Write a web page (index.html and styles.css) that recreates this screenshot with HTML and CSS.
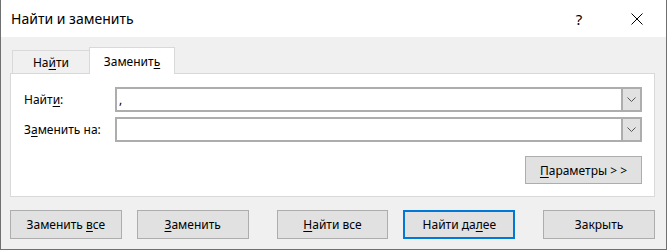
FILE: index.html
```html
<!DOCTYPE html>
<html lang="ru">
<head>
<meta charset="utf-8">
<title>Найти и заменить</title>
<link rel="stylesheet" href="styles.css">
</head>
<body>
<div class="window">
  <div class="titlebar">
    <span class="title">Найти и заменить</span>
    <span class="help">?</span>
    <span class="close"><svg width="12" height="12" viewBox="0 0 12 12"><path d="M0.5 0.5 L11.5 11.5 M11.5 0.5 L0.5 11.5" stroke="#000" stroke-width="1" fill="none"/></svg></span>
  </div>
  <div class="content">
    <div class="tabs">
      <div class="tab">На<u>й</u>ти</div>
      <div class="tab active">Заменит<u>ь</u></div>
    </div>
    <div class="panel">
      <div class="row">
        <span class="label">Найт<u>и</u>:</span>
        <div class="combo">
          <span class="value">,</span>
          <span class="drop"><svg width="9" height="5" viewBox="0 0 9 5"><path d="M0.5 0.5 L4.5 4.5 L8.5 0.5" stroke="#555" stroke-width="1" fill="none"/></svg></span>
        </div>
      </div>
      <div class="row">
        <span class="label">З<u>а</u>менить на:</span>
        <div class="combo">
          <span class="value"></span>
          <span class="drop"><svg width="9" height="5" viewBox="0 0 9 5"><path d="M0.5 0.5 L4.5 4.5 L8.5 0.5" stroke="#555" stroke-width="1" fill="none"/></svg></span>
        </div>
      </div>
      <div class="options">
        <button class="btn btn-options"><u>П</u>араметры &gt; &gt;</button>
      </div>
    </div>
    <div class="buttons">
      <button class="btn gap-s">Заменить <u>в</u>се</button>
      <button class="btn gap-l"><u>З</u>аменить</button>
      <button class="btn gap-s"><u>Н</u>айти все</button>
      <button class="btn default gap-l">Найти да<u>л</u>ее</button>
      <button class="btn">Закрыть</button>
    </div>
  </div>
</div>
</body>
</html>
```
FILE: styles.css
```css
* { box-sizing: border-box; }
html, body { margin: 0; padding: 0; }
body {
  font-family: "Noto Sans", "Segoe UI", sans-serif;
  font-size: 12px;
  color: #000;
  background: #fff;
}
u { text-decoration-thickness: 1px; text-underline-offset: 2px; }
.window {
  width: 667px;
  height: 250px;
  background: #f0f0f0;
  border: 1px solid #707070;
  border-top: none;
  display: flex;
  flex-direction: column;
}
.titlebar {
  height: 37px;
  background: #fff;
  display: flex;
  align-items: center;
  padding-left: 10px;
  flex: none;
}
.title { flex: 1; font-size: 14px; }
.help {
  width: 46px;
  text-align: center;
  font-size: 15px;
  margin-right: 12px;
}
.close {
  width: 46px;
  display: flex;
  justify-content: center;
  margin-right: 6px;
}
.content { padding: 10px 11px 0 9px; }
.tabs {
  display: flex;
  align-items: flex-end;
  height: 26px;
  padding-left: 2px;
}
.tab {
  width: 77px;
  height: 23px;
  border: 1px solid #d9d9d9;
  border-right: none;
  border-bottom: none;
  display: flex;
  justify-content: center;
  align-items: center;
  padding-top: 1px;
}
.tab.active {
  position: relative;
  width: 86px;
  height: 27px;
  margin-bottom: -1px;
  background: #fff;
  border-right: 1px solid #d9d9d9;
  padding-top: 0;
}
.panel {
  background: #fff;
  border: 1px solid #d9d9d9;
  height: 124px;
  padding: 13px 12px 0 13px;
}
.row {
  display: flex;
  align-items: center;
  height: 25px;
}
.row + .row { margin-top: 5px; }
.label { width: 91px; flex: none; }
.combo {
  flex: 1;
  height: 25px;
  border: 2px solid #adadad;
  display: flex;
  background: #fff;
}
.value { flex: 1; padding-left: 2px; line-height: 21px; }
.drop {
  width: 19px;
  background: #e1e1e1;
  border-left: 2px solid #adadad;
  display: flex;
  align-items: center;
  justify-content: center;
}
.options {
  display: flex;
  justify-content: flex-end;
  margin-top: 14px;
}
.btn {
  font-family: inherit;
  font-size: 12px;
  color: #000;
  background: #e1e1e1;
  border: 1px solid #adadad;
  border-radius: 0;
  width: 112px;
  height: 29px;
  padding: 0;
  margin: 0;
}
.btn-options { width: 117px; height: 28px; }
.btn.default { border: 2px solid #0078d7; }
.buttons {
  display: flex;
  margin-top: 13px;
  padding-left: 0;
}
.gap-s { margin-right: 15px; }
.gap-l { margin-right: 28px; }
```
